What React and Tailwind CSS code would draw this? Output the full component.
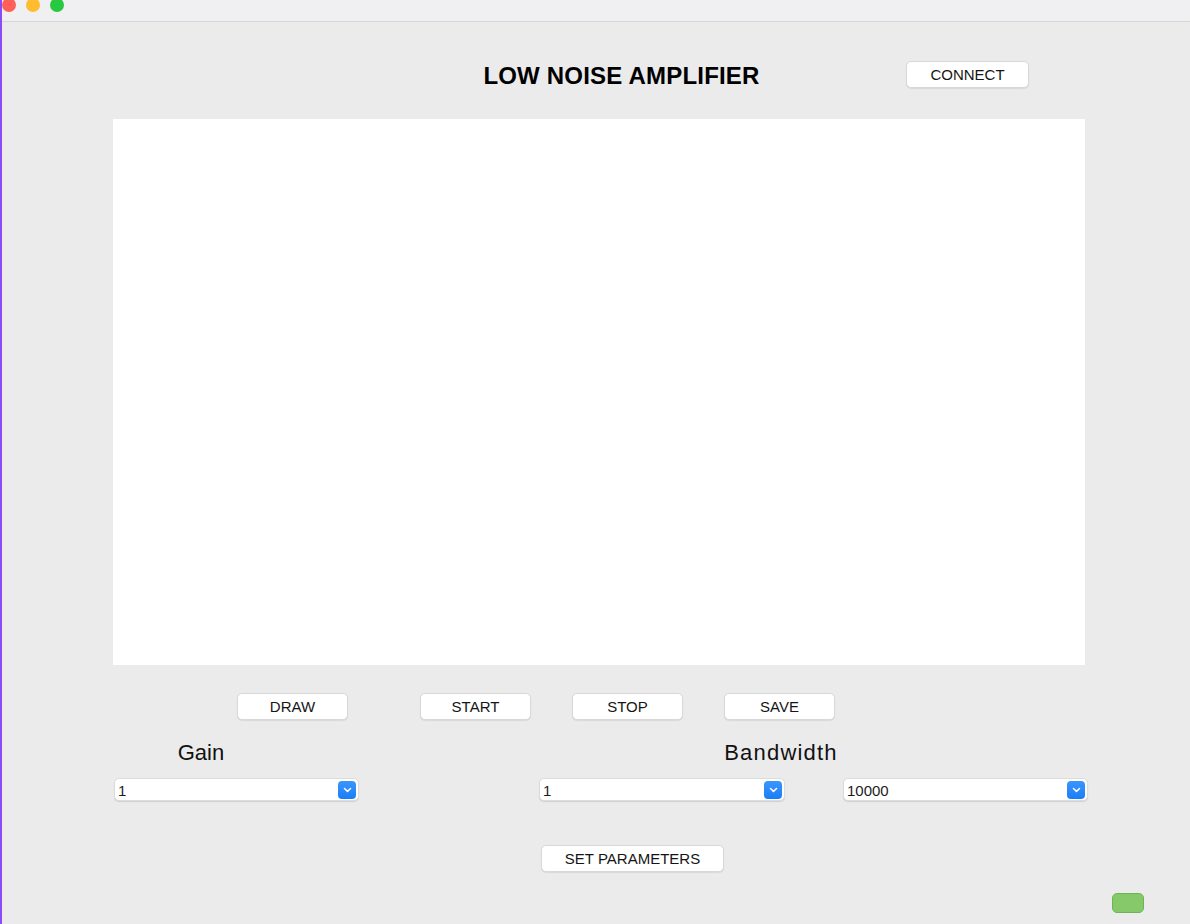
import React from "react";

const font = { fontFamily: '"Liberation Sans", Arial, Helvetica, sans-serif' };

function Btn({ children, className = "" }) {
  return (
    <div
      className={
        "h-[27px] bg-white rounded-[5px] border border-[#d8d8d8] shadow-[0_1px_1px_rgba(0,0,0,0.08)] flex items-center justify-center text-[15px] text-[#151515] pt-[1px] shrink-0 " +
        className
      }
    >
      {children}
    </div>
  );
}

function Select({ value, className = "" }) {
  return (
    <div
      className={
        "h-[23px] bg-white rounded-[5px] border border-[#dcdcdc] shadow-[0_1px_1px_rgba(0,0,0,0.12)] flex items-center justify-between pl-[3px] pr-[2px] shrink-0 " +
        className
      }
    >
      <span className="text-[15px] text-[#1c1c1c] leading-none pt-[1px]">{value}</span>
      <div className="w-[18px] h-[18px] rounded-[4px] bg-gradient-to-b from-[#3a95fd] to-[#1a7ef6] flex items-center justify-center">
        <svg width="9" height="6" viewBox="0 0 9 6">
          <path d="M1.5 1.5 L4.5 4.3 L7.5 1.5" fill="none" stroke="white" strokeWidth="1.6" strokeLinecap="round" strokeLinejoin="round" />
        </svg>
      </div>
    </div>
  );
}

export default function App() {
  return (
    <div
      className="w-[1190px] h-[924px] bg-[#ebebeb] border-l-2 border-[#8a4cf6] overflow-hidden flex flex-col"
      style={font}
    >
      {/* title bar */}
      <div className="h-[22px] bg-[#f0eff1] border-b border-[#d6d6d6] flex items-start shrink-0">
        <div className="flex gap-[10px] -mt-[2px]">
          <div className="w-[14px] h-[14px] rounded-full bg-[#fe5f57]" />
          <div className="w-[14px] h-[14px] rounded-full bg-[#febc2e]" />
          <div className="w-[14px] h-[14px] rounded-full bg-[#28c840]" />
        </div>
      </div>

      {/* header row */}
      <div className="flex items-center h-[27px] mt-[39px] shrink-0">
        <div className="ml-[398px] w-[443px] text-center font-bold text-[24px] tracking-[0.2px] leading-none text-black pt-[3px]">
          LOW NOISE AMPLIFIER
        </div>
        <Btn className="ml-[63px] w-[123px]">CONNECT</Btn>
      </div>

      {/* plot */}
      <div className="ml-[111px] mt-[31px] w-[972px] h-[546px] bg-white shrink-0" />

      {/* buttons */}
      <div className="flex mt-[28px] shrink-0">
        <Btn className="ml-[235px] w-[111px]">DRAW</Btn>
        <Btn className="ml-[72px] w-[111px]">START</Btn>
        <Btn className="ml-[41px] w-[111px]">STOP</Btn>
        <Btn className="ml-[41px] w-[111px]">SAVE</Btn>
      </div>

      {/* labels */}
      <div className="flex mt-[19px] h-[26px] items-center shrink-0">
        <div className="ml-[150px] w-[98px] text-center text-[22px] leading-none text-[#111] pt-[1px]">Gain</div>
        <div className="ml-[450px] w-[162px] text-center text-[22px] tracking-[1.2px] leading-none text-[#111] pt-[1px]">Bandwidth</div>
      </div>

      {/* selects */}
      <div className="flex mt-[13px] shrink-0">
        <Select value="1" className="ml-[112px] w-[245px]" />
        <Select value="1" className="ml-[180px] w-[246px]" />
        <Select value="10000" className="ml-[58px] w-[245px]" />
      </div>

      {/* set parameters */}
      <div className="flex mt-[44px] shrink-0">
        <Btn className="ml-[539px] w-[183px]">SET PARAMETERS</Btn>
      </div>

      {/* status indicator */}
      <div className="flex mt-[21px] shrink-0">
        <div className="ml-[1110px] w-[32px] h-[20px] rounded-[5px] bg-[#86c96b] border border-[#6db553]" />
      </div>
    </div>
  );
}
